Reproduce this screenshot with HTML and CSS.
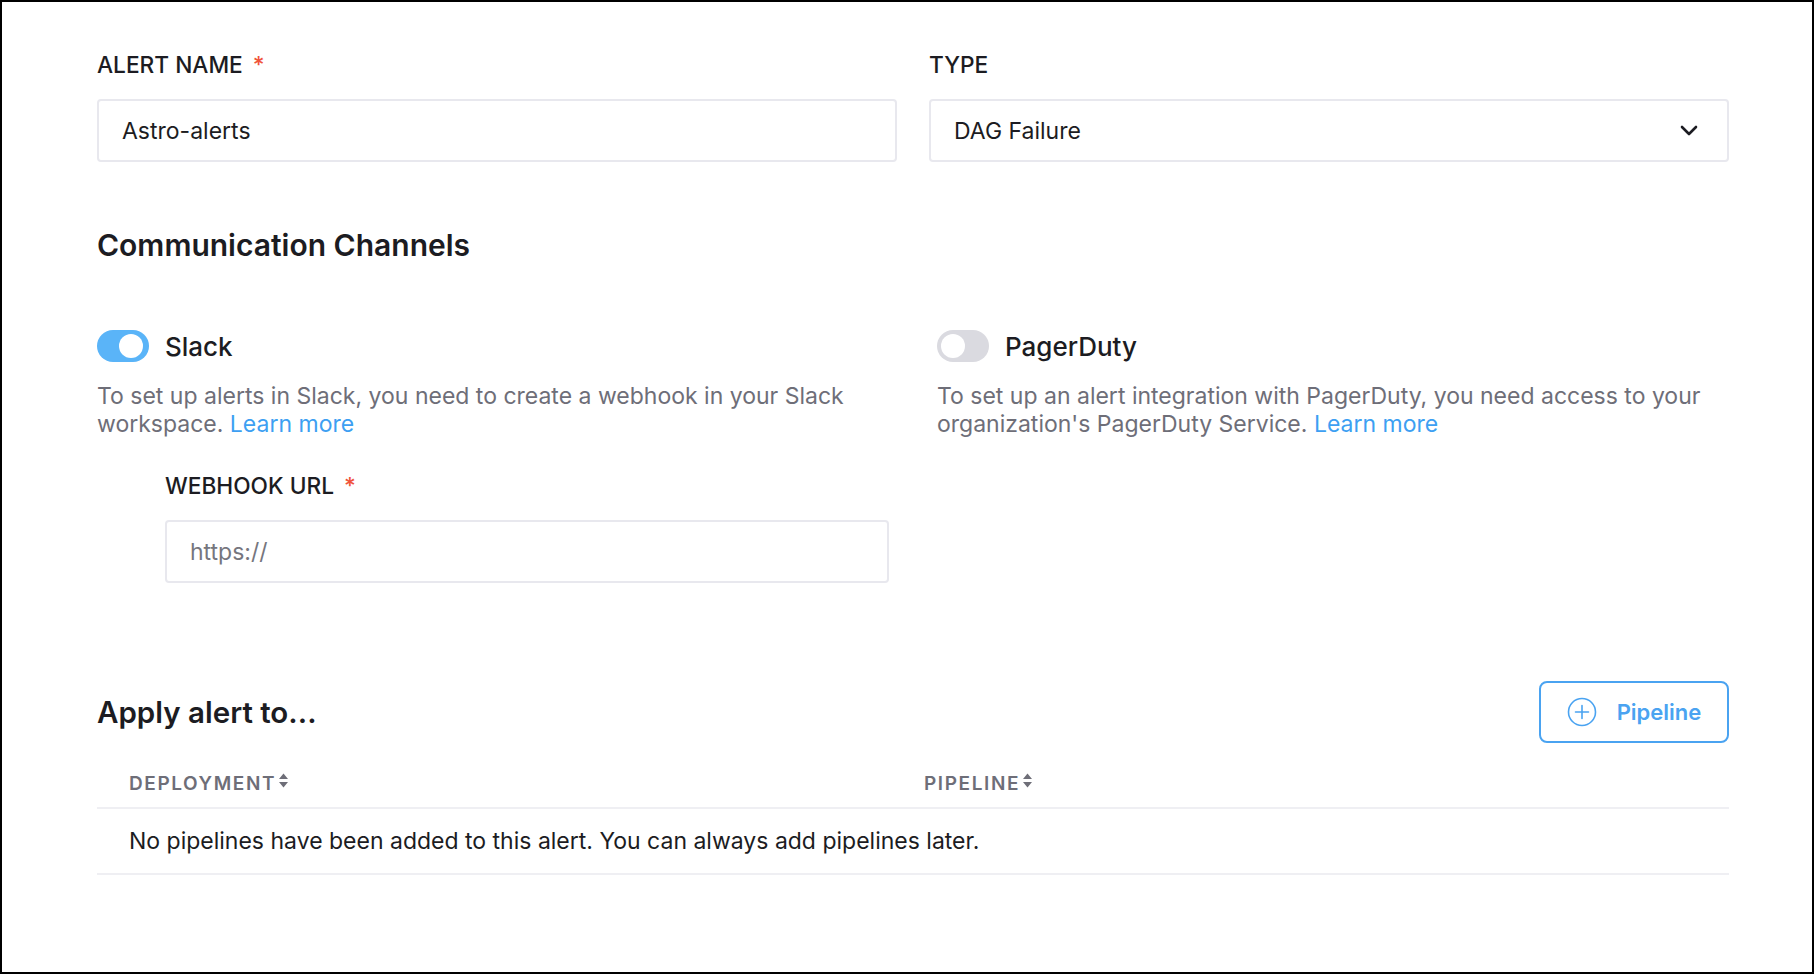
FILE: index.html
```html
<!DOCTYPE html>
<html lang="en">
<head>
<meta charset="utf-8">
<title>Alert</title>
<link rel="stylesheet" href="styles.css">
</head>
<body>
<div class="page">
  <div class="grid-two">
    <div class="field">
      <div class="label">ALERT NAME <span class="req">*</span></div>
      <div class="input">Astro-alerts</div>
    </div>
    <div class="field">
      <div class="label">TYPE</div>
      <div class="input select">
        <span>DAG Failure</span>
        <svg class="chev" width="18" height="11" viewBox="0 0 18 11"><path d="M2 2 L9 9 L16 2" fill="none" stroke="#1c1c22" stroke-width="2.6" stroke-linecap="round" stroke-linejoin="round"/></svg>
      </div>
    </div>
  </div>

  <h2 class="section-title">Communication Channels</h2>

  <div class="channels">
    <div class="channel">
      <div class="channel-head">
        <span class="toggle on"><span class="knob"></span></span>
        <span class="channel-name">Slack</span>
      </div>
      <p class="desc">To set up alerts in Slack, you need to create a webhook in your Slack workspace. <a class="link" href="#">Learn more</a></p>
      <div class="field sub">
        <div class="label">WEBHOOK URL <span class="req">*</span></div>
        <div class="input placeholder">https://</div>
      </div>
    </div>
    <div class="channel">
      <div class="channel-head">
        <span class="toggle"><span class="knob"></span></span>
        <span class="channel-name">PagerDuty</span>
      </div>
      <p class="desc">To set up an alert integration with PagerDuty, you need access to your organization's PagerDuty Service. <a class="link" href="#">Learn more</a></p>
    </div>
  </div>

  <div class="apply-head">
    <h2 class="apply-title">Apply alert to...</h2>
    <button class="btn-outline">
      <svg width="30" height="30" viewBox="0 0 30 30"><circle cx="15" cy="15" r="13.5" fill="none" stroke="#4aa3f1" stroke-width="1.6"/><path d="M15 8.5 V21.5 M8.5 15 H21.5" stroke="#4aa3f1" stroke-width="1.6" stroke-linecap="round"/></svg>
      <span>Pipeline</span>
    </button>
  </div>

  <div class="table">
    <div class="thead">
      <div class="th col1">DEPLOYMENT<svg class="sort" width="11" height="17" viewBox="0 0 11 17"><path d="M5.5 1.5 L10 7 H1 Z M5.5 15.5 L1 10 H10 Z" fill="#6e6e78"/></svg></div>
      <div class="th">PIPELINE<svg class="sort" width="11" height="17" viewBox="0 0 11 17"><path d="M5.5 1.5 L10 7 H1 Z M5.5 15.5 L1 10 H10 Z" fill="#6e6e78"/></svg></div>
    </div>
    <div class="trow">No pipelines have been added to this alert. You can always add pipelines later.</div>
  </div>
</div>
</body>
</html>
```

FILE: styles.css
```css
* { box-sizing: border-box; }
html, body { margin: 0; padding: 0; }
body {
  width: 1814px;
  height: 974px;
  border: 2px solid #000;
  background: #fff;
  font-family: Inter, "Noto Sans", sans-serif;
  color: #1c1c22;
  overflow: hidden;
}
.page {
  width: 1632px;
  margin-left: 95px;
  padding-top: 49px;
}
.grid-two {
  display: grid;
  grid-template-columns: 800px 800px;
  column-gap: 32px;
}
.field { display: flex; flex-direction: column; }
.label {
  font-size: 22.7px;
  line-height: 28px;
  font-weight: 500;
  color: #1c1c22;
  margin-bottom: 20px;
}
.req { color: #f0533a; margin-left: 4px; }
.input {
  height: 63px;
  border: 2px solid #e8e8ee;
  border-radius: 4px;
  padding: 0 23px;
  display: flex;
  align-items: center;
  font-size: 23px;
  color: #1c1c22;
}
.select { justify-content: space-between; padding-right: 29px; }
.placeholder { color: #76767e; }
.section-title {
  margin: 67px 0 0;
  font-size: 30px;
  line-height: 32px;
  font-weight: 600;
  color: #1c1c22;
}
.channels {
  display: grid;
  grid-template-columns: 792px 792px;
  column-gap: 48px;
  margin-top: 69px;
}
.channel-head { display: flex; align-items: center; gap: 16px; height: 32px; }
.toggle {
  width: 52px;
  height: 32px;
  border-radius: 16px;
  background: #dadae0;
  position: relative;
  flex: none;
}
.toggle.on { background: #5ab4f8; }
.knob {
  position: absolute;
  top: 4px;
  left: 4px;
  width: 24px;
  height: 24px;
  border-radius: 50%;
  background: #fff;
}
.toggle.on .knob { left: 22px; }
.channel-name { font-size: 26px; font-weight: 500; color: #1c1c22; }
.desc {
  margin: 20px 0 0;
  font-size: 23px;
  line-height: 28px;
  color: #6e6e78;
}
.link { color: #3d9ff2; text-decoration: none; }
.field.sub { margin-top: 34px; margin-left: 68px; }
.apply-head {
  display: flex;
  justify-content: space-between;
  align-items: center;
  margin-top: 98px;
}
.apply-title {
  margin: 0;
  font-size: 29.5px;
  font-weight: 600;
  color: #1c1c22;
}
.btn-outline {
  width: 190px;
  height: 62px;
  border: 2px solid #4aa3f1;
  border-radius: 8px;
  background: #fff;
  display: flex;
  align-items: center;
  justify-content: center;
  gap: 20px;
  font-family: inherit;
  font-size: 22px;
  font-weight: 600;
  color: #4aa3f1;
  padding: 0;
}
.table { margin-top: 14px; }
.thead {
  display: flex;
  align-items: center;
  height: 52px;
  padding-top: 2px;
  border-bottom: 2px solid #efeff3;
}
.th {
  font-size: 19px;
  font-weight: 600;
  color: #6e6e78;
  letter-spacing: 1.6px;
  display: flex;
  align-items: center;
}
.col1 { width: 827px; padding-left: 32px; }
.sort { margin-left: 2px; margin-top: -6px; }
.trow {
  height: 66px;
  display: flex;
  align-items: center;
  padding-left: 32px;
  font-size: 23px;
  color: #1c1c22;
  border-bottom: 2px solid #efeff3;
}
```
